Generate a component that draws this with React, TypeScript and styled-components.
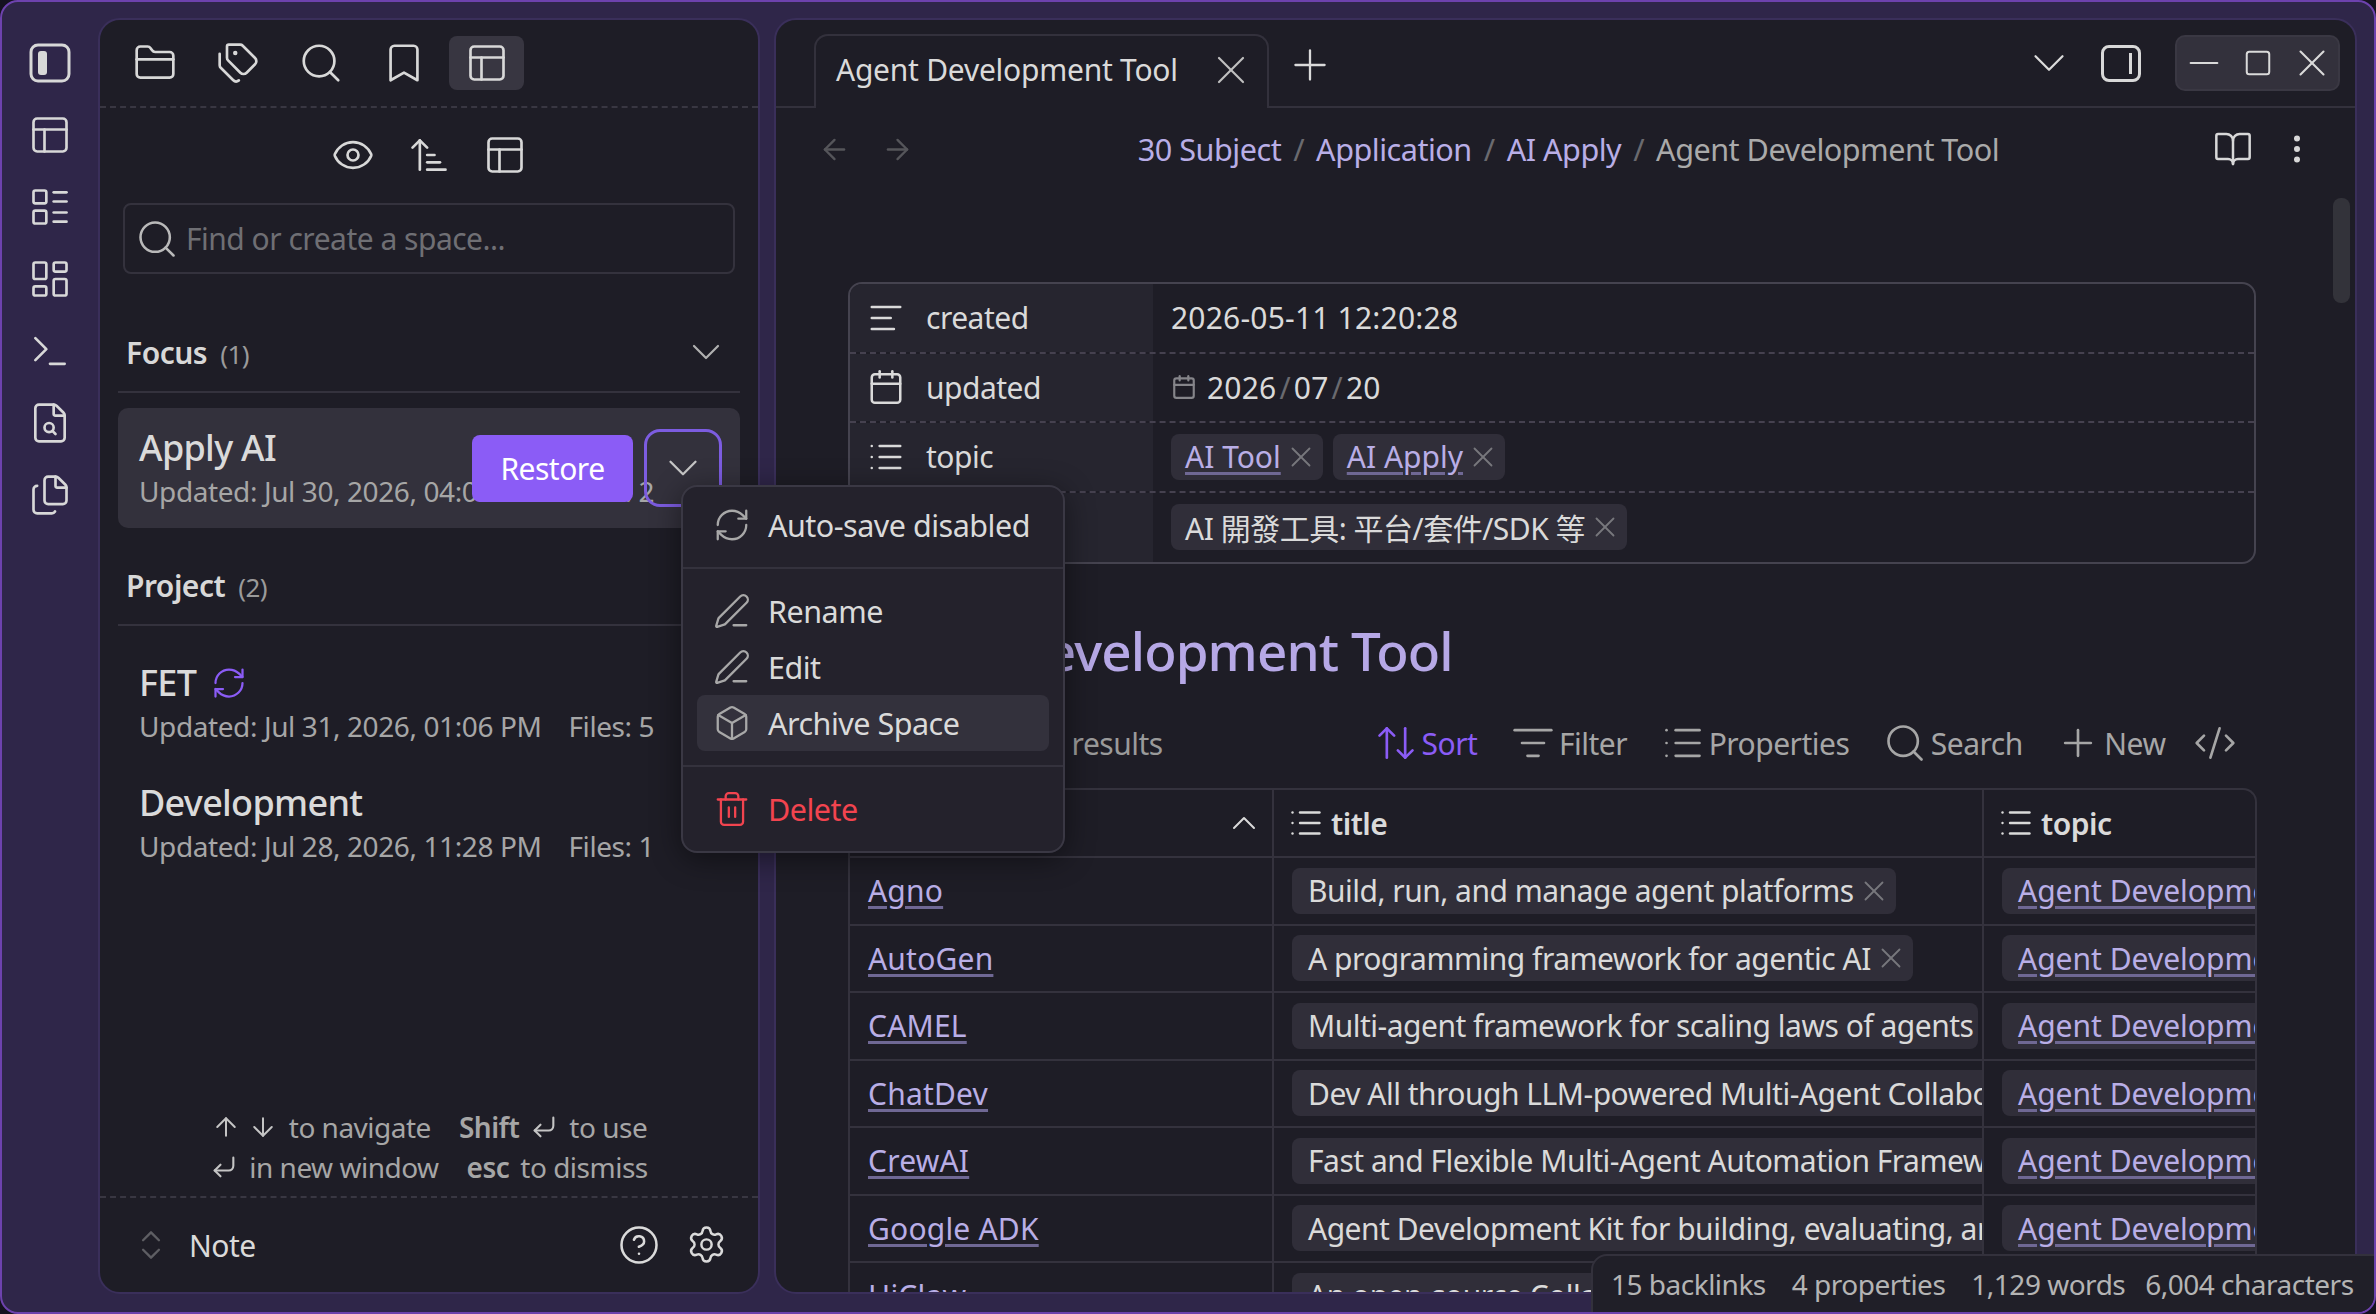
import styled, { createGlobalStyle } from "styled-components";
import {
  ArrowDown,
  ArrowLeft,
  ArrowRight,
  ArrowUp,
  ArrowUpDown,
  ArrowUpNarrowWide,
  AlignLeft,
  Bookmark,
  BookOpen,
  Box,
  Calendar,
  ChevronDown,
  ChevronsUpDown,
  ChevronUp,
  CircleHelp,
  CodeXml,
  CornerDownLeft,
  EllipsisVertical,
  Eye,
  FileSearch,
  Files,
  FolderClosed,
  LayoutDashboard,
  LayoutList,
  List,
  ListFilter,
  Minus,
  PanelsTopLeft,
  PenLine,
  Plus,
  RefreshCw,
  Search,
  Settings,
  Square,
  Tags,
  Terminal,
  Trash2,
  X,
} from "lucide-react";

const GlobalStyle = createGlobalStyle`
  html, body {
    margin: 0;
    padding: 0;
    background: #15121f;
    font-family: "Noto Sans", "Noto Sans CJK TC", sans-serif;
    overflow: hidden;
  }
  * { box-sizing: border-box; }
`;

const Window = styled.div`
  position: relative;
  width: 2376px;
  height: 1314px;
  display: flex;
  background: #2f2649;
  border: 2px solid #6d42ad;
  border-radius: 18px;
  padding: 16px 17px 18px 0;
  overflow: hidden;
  color: #dadada;
  letter-spacing: -0.5px;
`;

const Rail = styled.div`
  width: 96px;
  flex: none;
  display: flex;
  flex-direction: column;
  align-items: center;
  gap: 28px;
  padding-top: 23px;
  color: #d8d8d8;
`;

const Panel = styled.div`
  position: relative;
  display: flex;
  flex-direction: column;
  background: #1e1d26;
  border: 2px solid #3a2f5a;
  border-radius: 22px;
  overflow: hidden;
`;

const LeftPanel = styled(Panel)`
  width: 662px;
  flex: none;
  margin-right: 14px;
`;

const RightPanel = styled(Panel)`
  flex: 1;
  min-width: 0;
`;

const IconTabs = styled.div`
  height: 88px;
  flex: none;
  display: flex;
  align-items: center;
  gap: 8px;
  padding: 0 17px;
  border-bottom: 2px dashed #393742;
`;

const IconTab = styled.div<{ $active?: boolean }>`
  width: 75px;
  height: 54px;
  display: flex;
  align-items: center;
  justify-content: center;
  border-radius: 8px;
  color: #d8d8d8;
  background: ${(p) => (p.$active ? "#383641" : "transparent")};
`;

const SubTools = styled.div`
  display: flex;
  justify-content: center;
  gap: 32px;
  padding-top: 25px;
  color: #d8d8d8;
`;

const SearchBox = styled.div`
  display: flex;
  align-items: center;
  gap: 7px;
  height: 71px;
  margin: 26px 23px 0 23px;
  padding: 0 10px;
  border: 2px solid #34323d;
  border-radius: 8px;
  color: #b9b9b9;
  font-size: 30px;
  span {
    color: #6f6f74;
  }
`;

const GroupHeader = styled.div<{ $top: number }>`
  display: flex;
  align-items: center;
  justify-content: space-between;
  height: 80px;
  margin: ${(p) => p.$top}px 18px 0 18px;
  padding: 0 10px 0 8px;
  border-bottom: 2px solid #34323d;
`;

const GroupName = styled.div`
  font-size: 30px;
  font-weight: 600;
  color: #d8d8d8;
  small {
    font-size: 26px;
    font-weight: 400;
    color: #9a9a9a;
    margin-left: 13px;
  }
`;

const ActiveCard = styled.div`
  position: relative;
  margin: 15px 18px 0 18px;
  padding: 16px 21px;
  height: 120px;
  background: #33313c;
  border-radius: 10px;
`;

const SpaceList = styled.div`
  display: flex;
  flex-direction: column;
  gap: 2px;
  padding: 17px 18px 0 18px;
`;

const SpaceCard = styled.div`
  padding: 16px 21px;
`;

const SpaceName = styled.div`
  display: flex;
  align-items: center;
  gap: 15px;
  font-size: 36px;
  line-height: 48px;
  font-weight: 500;
  color: #dadada;
  letter-spacing: -0.7px;
`;

const SpaceMeta = styled.div`
  display: flex;
  gap: 27px;
  font-size: 28px;
  line-height: 38px;
  letter-spacing: -0.4px;
  color: #a6a6a6;
  white-space: nowrap;
`;

const RestoreButton = styled.div`
  position: absolute;
  left: 354px;
  top: 27px;
  width: 161px;
  height: 67px;
  display: flex;
  align-items: center;
  justify-content: center;
  background: #8b5cf6;
  border-radius: 8px;
  color: #fff;
  font-size: 30px;
`;

const OutlinedChevron = styled.div`
  position: absolute;
  left: 526px;
  top: 21px;
  width: 78px;
  height: 78px;
  display: flex;
  align-items: center;
  justify-content: center;
  border: 3px solid #7c5ce0;
  border-radius: 16px;
  color: #c6c6c6;
`;

const Hints = styled.div`
  margin-top: auto;
  height: 89px;
  display: flex;
  flex-direction: column;
  align-items: center;
  font-size: 28px;
  line-height: 40px;
  color: #a6a6a6;
`;

const HintRow = styled.div`
  display: flex;
  align-items: center;
  gap: 11px;
  svg {
    color: #c4c4c4;
  }
  b {
    font-weight: 600;
    margin-left: 17px;
  }
`;

const DownHint = styled(ArrowDown)`
  margin-left: -4px;
`;

const LeftFooter = styled.div`
  height: 96px;
  flex: none;
  display: flex;
  align-items: center;
  border-top: 2px dashed #393742;
  padding: 0 31px 0 32px;
  gap: 19px;
  font-size: 30px;
  color: #dadada;
`;

const FooterIcons = styled.div`
  margin-left: auto;
  display: flex;
  gap: 26px;
`;

const TopBar = styled.div`
  height: 88px;
  flex: none;
  display: flex;
  align-items: flex-end;
  padding-right: 15px;
  border-bottom: 2px solid #33313c;
`;

const Tab = styled.div`
  display: flex;
  align-items: center;
  justify-content: space-between;
  width: 455px;
  height: 74px;
  margin-left: 38px;
  margin-bottom: -2px;
  padding: 0 12px 5px 20px;
  background: #1e1d26;
  border: 2px solid #33313c;
  border-bottom: none;
  border-radius: 14px 14px 0 0;
  font-size: 30px;
  letter-spacing: -0.25px;
  color: #dadada;
`;

const TabPlus = styled.div`
  align-self: center;
  margin: 3px 0 0 16px;
  display: flex;
  color: #dadada;
`;

const TopRight = styled.div`
  align-self: center;
  margin-left: auto;
  display: flex;
  align-items: center;
  gap: 25px;
  color: #dadada;
`;

const PanelGlyph = styled.div`
  width: 40px;
  height: 37px;
  margin-right: 9px;
  border: 3px solid #d8d8d8;
  border-radius: 8px;
  display: flex;
  justify-content: flex-end;
  padding: 5px 6px;
  &::after {
    content: "";
    width: 3px;
    background: #d8d8d8;
  }
`;

const WindowButtons = styled.div`
  width: 165px;
  height: 56px;
  display: grid;
  grid-template-columns: repeat(3, 54px);
  place-items: center;
  justify-content: center;
  background: #33313c;
  border: 2px solid #3a3843;
  border-radius: 10px;
`;

const NavBar = styled.div`
  height: 82px;
  flex: none;
  display: flex;
  align-items: center;
  padding: 0 40px 0 42px;
  color: #55555a;
`;

const NavArrows = styled.div`
  display: flex;
  gap: 30px;
`;

const Crumbs = styled.div`
  flex: 1;
  display: flex;
  justify-content: center;
  gap: 12px;
  padding-left: 10px;
  font-size: 30.6px;
  color: #b9aee6;
  i {
    font-style: normal;
    color: #6a6a6f;
  }
  em {
    font-style: normal;
    color: #aaaaaa;
  }
`;

const NavTools = styled.div`
  display: flex;
  align-items: center;
  gap: 26px;
  color: #d8d8d8;
`;

const Scroller = styled.div`
  position: relative;
  flex: 1;
  min-height: 0;
  overflow: hidden;
  padding: 92px 0 0 72px;
`;

const ScrollThumb = styled.div`
  position: absolute;
  right: 5px;
  top: 8px;
  width: 17px;
  height: 105px;
  background: #33333a;
  border-radius: 8px;
`;

const Properties = styled.div`
  width: 1408px;
  border: 2px solid #45434f;
  border-radius: 14px;
  overflow: hidden;
`;

const PropRow = styled.div`
  display: grid;
  grid-template-columns: 303px 1fr;
  height: 69.5px;
  &:not(:last-child) {
    border-bottom: 2px dashed #45414f;
  }
`;

const PropKey = styled.div`
  display: flex;
  align-items: center;
  gap: 21px;
  padding-left: 17px;
  background: #26252f;
  color: #dadada;
  font-size: 30px;
`;

const PropValue = styled.div`
  display: flex;
  align-items: center;
  gap: 10px;
  padding-left: 18px;
  font-size: 30px;
  color: #dadada;
  svg {
    color: #85858a;
  }
`;

const DateText = styled.span`
  letter-spacing: 0.2px;
  i {
    font-style: normal;
    color: #6a6a6f;
    margin: 0 3px;
  }
`;

const Chip = styled.div`
  display: flex;
  align-items: center;
  gap: 3px;
  height: 46px;
  padding: 0 5px 0 14px;
  background: #302e39;
  border-radius: 8px;
  white-space: nowrap;
  svg {
    color: #77777c;
    flex: none;
  }
`;

const ChipLink = styled.span`
  color: #b9aee6;
  letter-spacing: 0;
  text-decoration: underline;
  text-decoration-color: #6f6894;
  text-underline-offset: 4px;
`;

const PageTitle = styled.h1`
  margin: 51px 0 0 0;
  font-size: 53px;
  line-height: 72px;
  font-weight: 500;
  letter-spacing: -0.9px;
  color: #b6a8e6;
`;

const ViewBar = styled.div`
  display: flex;
  align-items: center;
  justify-content: space-between;
  width: 1408px;
  height: 62px;
  margin-top: 25px;
  padding-right: 19px;
  color: #a6a6a6;
  font-size: 30px;
`;

const ViewCount = styled.span`
  margin-left: 183px;
  color: #9a9a9a;
`;

const ViewActions = styled.div`
  display: flex;
  align-items: center;
  gap: 33.5px;
`;

const ViewAction = styled.div<{ $accent?: boolean }>`
  display: flex;
  align-items: center;
  gap: 4px;
  color: ${(p) => (p.$accent ? "#8b5cf6" : "#a6a6a6")};
`;

const ViewCode = styled(CodeXml)`
  margin-left: -6px;
`;

const DataTable = styled.div`
  width: 1409px;
  margin-top: 14px;
  border: 2px solid #34323d;
  border-radius: 14px 14px 0 0;
  border-bottom: none;
  overflow: hidden;
`;

const DataRow = styled.div<{ $head?: boolean }>`
  display: grid;
  grid-template-columns: 424px 710px 1fr;
  height: ${(p) => (p.$head ? "68px" : "67.5px")};
  border-bottom: 2px solid #34323d;
  font-size: 30px;
  font-weight: ${(p) => (p.$head ? 600 : 400)};
`;

const DataCell = styled.div`
  display: flex;
  align-items: center;
  gap: 12px;
  min-width: 0;
  padding-left: 18px;
  overflow: hidden;
  white-space: nowrap;
  color: #dadada;
  &:not(:last-child) {
    border-right: 2px solid #34323d;
  }
`;

const HeadCell = styled(DataCell)`
  gap: 7px;
  padding-left: 14px;
`;

const SortCell = styled(DataCell)`
  justify-content: flex-end;
  padding-right: 8px;
`;

const RowLink = styled(DataCell)`
  color: #b9aee6;
  letter-spacing: 0.2px;
  text-decoration: underline;
  text-decoration-color: #6f6894;
  text-underline-offset: 4px;
`;

const CellChip = styled(Chip)`
  flex: none;
  padding: 0 5px 0 16px;
`;

const StatusBar = styled.div`
  position: absolute;
  right: -2px;
  bottom: -2px;
  width: 785px;
  height: 60px;
  display: flex;
  align-items: center;
  gap: 26px;
  padding: 0 0 0 18px;
  background: #201f28;
  border: 2px solid #33313c;
  border-radius: 16px 0 0 0;
  font-size: 28px;
  color: #b4b4b4;
  span:last-child {
    margin-left: -6px;
  }
`;

const Menu = styled.div`
  position: absolute;
  left: 679px;
  top: 483px;
  width: 384px;
  height: 368px;
  padding: 10px 14px;
  background: #24222c;
  border: 2px solid #3a3844;
  border-radius: 16px;
  box-shadow: 0 6px 30px rgba(0, 0, 0, 0.45);
`;

const MenuItem = styled.div<{ $active?: boolean; $danger?: boolean }>`
  display: flex;
  align-items: center;
  gap: 17px;
  height: 56px;
  padding: 0 16px;
  border-radius: 8px;
  font-size: 30.5px;
  background: ${(p) => (p.$active ? "#33313c" : "transparent")};
  color: ${(p) => (p.$danger ? "#f2444f" : "#dadada")};
  svg {
    color: ${(p) => (p.$danger ? "#f2444f" : "#a8a8a8")};
    flex: none;
  }
`;

const MenuDivider = styled.div`
  height: 2px;
  background: #34323d;
  margin: 14px -14px;
`;

const rows = [
  ["Agno", "Build, run, and manage agent platforms", true],
  ["AutoGen", "A programming framework for agentic AI", true],
  ["CAMEL", "Multi-agent framework for scaling laws of agents", false],
  ["ChatDev", "Dev All through LLM-powered Multi-Agent Collaboration", false],
  ["CrewAI", "Fast and Flexible Multi-Agent Automation Framework", false],
  ["Google ADK", "Agent Development Kit for building, evaluating, and deploying", false],
  ["HiClaw", "An open-source Collaborative Multi-Agent", false],
] as const;

function RailToggle() {
  return (
    <svg width="44" height="44" viewBox="0 0 44 44" fill="none">
      <rect x="3" y="4" width="38" height="36" rx="7" stroke="#d8d8d8" strokeWidth="3" />
      <rect x="10" y="10" width="9" height="24" rx="3" fill="#d8d8d8" />
    </svg>
  );
}

export default function App() {
  return (
    <>
      <GlobalStyle />
      <Window>
        <Rail>
          <RailToggle />
          <PanelsTopLeft size={44} strokeWidth={1.45} />
          <LayoutList size={44} strokeWidth={1.45} />
          <LayoutDashboard size={44} strokeWidth={1.45} />
          <Terminal size={44} strokeWidth={1.45} />
          <FileSearch size={44} strokeWidth={1.45} />
          <Files size={44} strokeWidth={1.45} />
        </Rail>

        <LeftPanel>
          <IconTabs>
            <IconTab><FolderClosed size={44} strokeWidth={1.45} /></IconTab>
            <IconTab><Tags size={44} strokeWidth={1.45} /></IconTab>
            <IconTab><Search size={46} strokeWidth={1.4} /></IconTab>
            <IconTab><Bookmark size={46} strokeWidth={1.4} /></IconTab>
            <IconTab $active><PanelsTopLeft size={44} strokeWidth={1.45} /></IconTab>
          </IconTabs>
          <SubTools>
            <Eye size={44} strokeWidth={1.45} />
            <ArrowUpNarrowWide size={44} strokeWidth={1.45} />
            <PanelsTopLeft size={44} strokeWidth={1.45} />
          </SubTools>
          <SearchBox>
            <Search size={44} strokeWidth={1.4} />
            <span>Find or create a space...</span>
          </SearchBox>

          <GroupHeader $top={39}>
            <GroupName>Focus<small>(1)</small></GroupName>
            <ChevronDown size={48} color="#b0b0b0" strokeWidth={1.1} />
          </GroupHeader>
          <ActiveCard>
            <SpaceName>Apply AI</SpaceName>
            <SpaceMeta>
              <span>Updated: Jul 30, 2026, 04:02 PM</span>
              <span>Files: 2</span>
            </SpaceMeta>
            <RestoreButton>Restore</RestoreButton>
            <OutlinedChevron><ChevronDown size={50} strokeWidth={1.1} /></OutlinedChevron>
          </ActiveCard>

          <GroupHeader $top={18}>
            <GroupName>Project<small>(2)</small></GroupName>
          </GroupHeader>
          <SpaceList>
            <SpaceCard>
              <SpaceName>FET <RefreshCw size={36} color="#8b5cf6" strokeWidth={1.5} /></SpaceName>
              <SpaceMeta>
                <span>Updated: Jul 31, 2026, 01:06 PM</span>
                <span>Files: 5</span>
              </SpaceMeta>
            </SpaceCard>
            <SpaceCard>
              <SpaceName>Development</SpaceName>
              <SpaceMeta>
                <span>Updated: Jul 28, 2026, 11:28 PM</span>
                <span>Files: 1</span>
              </SpaceMeta>
            </SpaceCard>
          </SpaceList>

          <Hints>
            <HintRow>
              <ArrowUp size={30} strokeWidth={1.6} /><DownHint size={30} strokeWidth={1.6} /> to navigate
              <b>Shift</b><CornerDownLeft size={28} strokeWidth={1.8} /> to use
            </HintRow>
            <HintRow>
              <CornerDownLeft size={28} strokeWidth={1.8} /> in new window
              <b>esc</b> to dismiss
            </HintRow>
          </Hints>
          <LeftFooter>
            <ChevronsUpDown size={38} color="#5e5e63" strokeWidth={1.5} />
            Note
            <FooterIcons>
              <CircleHelp size={42} strokeWidth={1.45} />
              <Settings size={41} strokeWidth={1.45} />
            </FooterIcons>
          </LeftFooter>
        </LeftPanel>

        <RightPanel>
          <TopBar>
            <Tab>
              Agent Development Tool
              <X size={48} color="#c0c0c0" strokeWidth={1.1} />
            </Tab>
            <TabPlus><Plus size={50} strokeWidth={1.1} /></TabPlus>
            <TopRight>
              <ChevronDown size={54} strokeWidth={1} />
              <PanelGlyph />
              <WindowButtons>
                <Minus size={46} strokeWidth={1} />
                <Square size={30} strokeWidth={1.6} />
                <X size={46} strokeWidth={1.1} />
              </WindowButtons>
            </TopRight>
          </TopBar>
          <NavBar>
            <NavArrows>
              <ArrowLeft size={33} strokeWidth={1.7} />
              <ArrowRight size={33} strokeWidth={1.7} />
            </NavArrows>
            <Crumbs>
              <span>30 Subject</span><i>/</i>
              <span>Application</span><i>/</i>
              <span>AI Apply</span><i>/</i>
              <em>Agent Development Tool</em>
            </Crumbs>
            <NavTools>
              <BookOpen size={40} strokeWidth={1.5} />
              <EllipsisVertical size={36} strokeWidth={2} />
            </NavTools>
          </NavBar>
          <Scroller>
            <ScrollThumb />
            <Properties>
              <PropRow>
                <PropKey><AlignLeft size={38} strokeWidth={1.6} />created</PropKey>
                <PropValue><DateText>2026-05-11 12:20:28</DateText></PropValue>
              </PropRow>
              <PropRow>
                <PropKey><Calendar size={38} strokeWidth={1.6} />updated</PropKey>
                <PropValue>
                  <Calendar size={26} strokeWidth={2} />
                  <DateText>2026<i>/</i>07<i>/</i>20</DateText>
                </PropValue>
              </PropRow>
              <PropRow>
                <PropKey><List size={38} strokeWidth={1.6} />topic</PropKey>
                <PropValue>
                  <Chip><ChipLink>AI Tool</ChipLink><X size={34} strokeWidth={1.3} /></Chip>
                  <Chip><ChipLink>AI Apply</ChipLink><X size={34} strokeWidth={1.3} /></Chip>
                </PropValue>
              </PropRow>
              <PropRow>
                <PropKey><List size={38} strokeWidth={1.6} />title</PropKey>
                <PropValue>
                  <Chip>AI 開發工具: 平台/套件/SDK 等<X size={34} strokeWidth={1.3} /></Chip>
                </PropValue>
              </PropRow>
            </Properties>

            <PageTitle>Agent Development Tool</PageTitle>
            <ViewBar>
              <ViewCount>15 results</ViewCount>
              <ViewActions>
                <ViewAction $accent><ArrowUpDown size={44} strokeWidth={1.45} />Sort</ViewAction>
                <ViewAction><ListFilter size={44} strokeWidth={1.45} />Filter</ViewAction>
                <ViewAction><List size={44} strokeWidth={1.45} />Properties</ViewAction>
                <ViewAction><Search size={44} strokeWidth={1.45} />Search</ViewAction>
                <ViewAction><Plus size={44} strokeWidth={1.45} />New</ViewAction>
                <ViewCode size={44} strokeWidth={1.45} />
              </ViewActions>
            </ViewBar>

            <DataTable>
              <DataRow $head>
                <SortCell><ChevronUp size={40} strokeWidth={1.2} /></SortCell>
                <HeadCell><List size={36} strokeWidth={1.6} />title</HeadCell>
                <HeadCell><List size={36} strokeWidth={1.6} />topic</HeadCell>
              </DataRow>
              {rows.map(([name, title, closable]) => (
                <DataRow key={name}>
                  <RowLink>{name}</RowLink>
                  <DataCell>
                    <CellChip>{title}{closable && <X size={34} strokeWidth={1.3} />}</CellChip>
                  </DataCell>
                  <DataCell>
                    <CellChip><ChipLink>Agent Development Tool</ChipLink></CellChip>
                  </DataCell>
                </DataRow>
              ))}
            </DataTable>
          </Scroller>
        </RightPanel>

        <StatusBar>
          <span>15 backlinks</span>
          <span>4 properties</span>
          <span>1,129 words</span>
          <span>6,004 characters</span>
        </StatusBar>

        <Menu>
          <MenuItem><RefreshCw size={38} strokeWidth={1.45} />Auto-save disabled</MenuItem>
          <MenuDivider />
          <MenuItem><PenLine size={38} strokeWidth={1.45} />Rename</MenuItem>
          <MenuItem><PenLine size={38} strokeWidth={1.45} />Edit</MenuItem>
          <MenuItem $active><Box size={38} strokeWidth={1.45} />Archive Space</MenuItem>
          <MenuDivider />
          <MenuItem $danger><Trash2 size={38} strokeWidth={1.45} />Delete</MenuItem>
        </Menu>
      </Window>
    </>
  );
}
